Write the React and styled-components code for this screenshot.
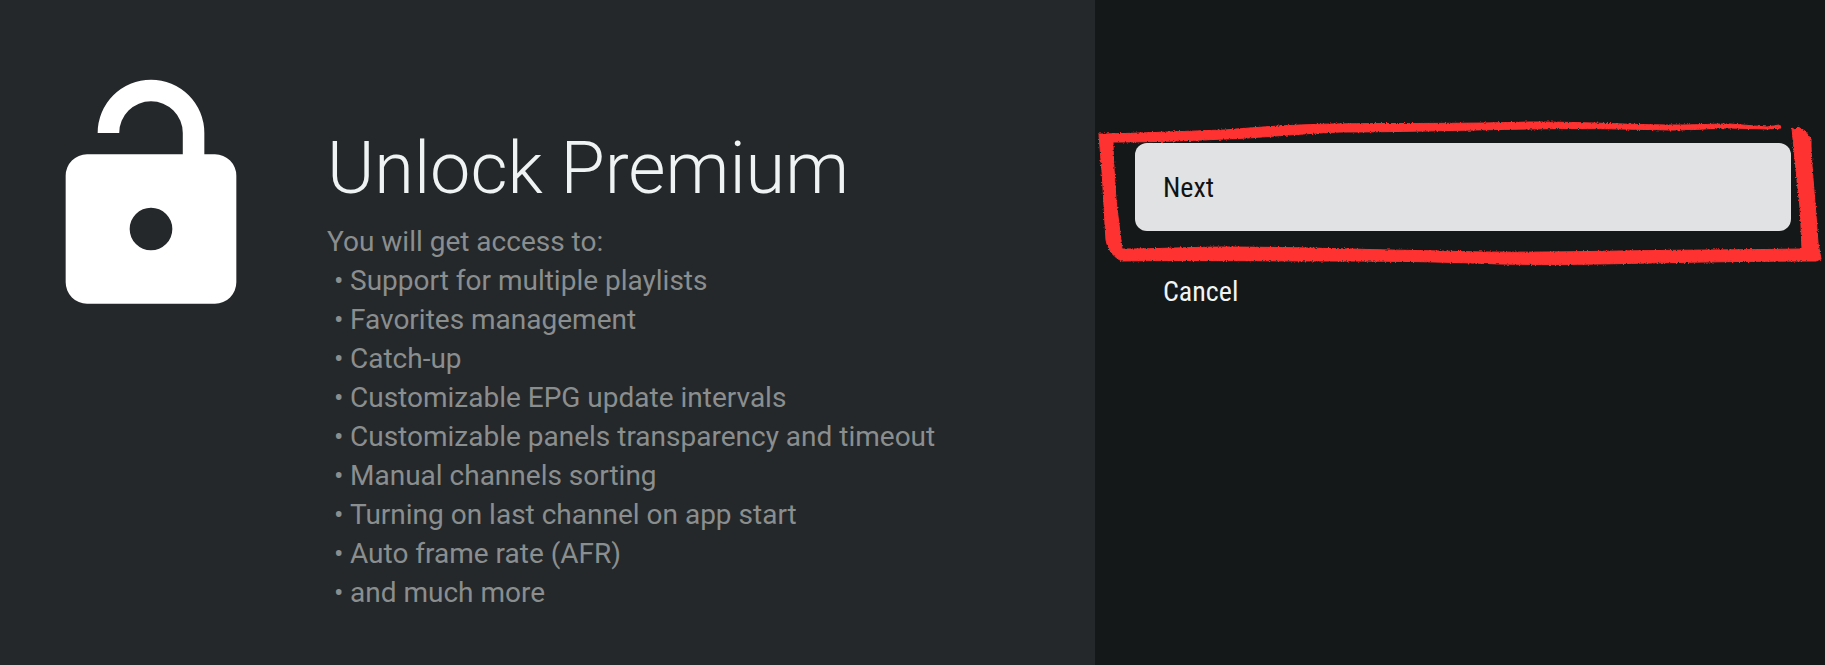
import React from "react";
import styled, { createGlobalStyle } from "styled-components";

const features = [
  "Support for multiple playlists",
  "Favorites management",
  "Catch-up",
  "Customizable EPG update intervals",
  "Customizable panels transparency and timeout",
  "Manual channels sorting",
  "Turning on last channel on app start",
  "Auto frame rate (AFR)",
  "and much more",
];

const LockIcon = () => (
  <Lock viewBox="0 0 24 24" aria-hidden="true">
    <path
      fillRule="evenodd"
      d="M18 8h-1V6A5 5 0 0 0 7 6h2.02a2.98 2.98 0 0 1 5.96 0v2H6a2 2 0 0 0-2 2v10a2 2 0 0 0 2 2h12a2 2 0 0 0 2-2V10a2 2 0 0 0-2-2zm-6 9a2 2 0 1 1 0-4 2 2 0 0 1 0 4z"
    />
  </Lock>
);

const BrushFrame = () => (
  <Brush viewBox="1095 113 730 160" preserveAspectRatio="none" aria-hidden="true">
    <filter id="rough" x="-2%" y="-10%" width="104%" height="120%">
      <feTurbulence type="fractalNoise" baseFrequency="0.6" numOctaves="2" seed="4" />
      <feDisplacementMap in="SourceGraphic" scale="3" xChannelSelector="R" yChannelSelector="G" />
    </filter>
    <g filter="url(#rough)">
      <path d="M1099 134 L1103 134 C1150 133 1190 131 1225 130 C1260 127 1290 125 1330 124 C1400 123 1470 124 1530 122 C1590 122 1630 125 1673 125 C1700 125 1710 124 1730 124 L1755 126 L1767 127 L1779 125 L1781 128 L1767 129 L1730 128 C1710 128 1700 130 1670 130 C1620 129 1590 128 1530 129 C1460 130 1400 132 1340 132 C1290 134 1260 138 1225 139 C1180 141 1150 142 1113 142 C1113 160 1115 180 1116 200 L1122 249 C1160 249 1190 247 1230 247 C1300 247 1370 250 1440 251 C1500 253 1560 252 1620 251 C1680 250 1740 250 1802 249 C1801 230 1801 210 1798 190 C1796 170 1794 150 1792 128 L1795 130 L1798 127 L1805 131 L1811 139 L1811 146 C1812 170 1814 190 1816 215 L1818 243 L1821 259 L1816 261 C1760 261 1700 262 1650 263 C1600 264 1560 265 1500 264 C1450 262 1400 261 1340 261 C1260 261 1190 260 1122 261 C1115 258 1108 251 1106 240 C1104 210 1103 180 1101 160 Z" />
    </g>
  </Brush>
);

const App = () => {
  return (
    <Page>
      <GlobalStyle />
      <Guidance>
        <LockIcon />
        <Description>
          <Title>Unlock Premium</Title>
          <Intro>You will get access to:</Intro>
          <FeatureList>
            {features.map((feature) => (
              <Feature key={feature}>{feature}</Feature>
            ))}
          </FeatureList>
        </Description>
      </Guidance>
      <Actions>
        <Highlighted>
          <ActionButton $selected>Next</ActionButton>
          <BrushFrame />
        </Highlighted>
        <ActionButton>Cancel</ActionButton>
      </Actions>
    </Page>
  );
};

const GlobalStyle = createGlobalStyle`
  * {
    box-sizing: border-box;
  }

  body {
    margin: 0;
    background: #141819;
    font-family: Roboto, "Liberation Sans", sans-serif;
  }
`;

const Page = styled.main`
  display: grid;
  grid-template-columns: 3fr 2fr;
  min-height: 100vh;
`;

const Guidance = styled.section`
  display: flex;
  align-items: flex-start;
  gap: 48px;
  padding: 69px 24px 36px 23px;
  background: #24282a;
`;

const Lock = styled.svg`
  flex: none;
  width: 256px;
  height: 256px;
  fill: #fefffe;
`;

const Description = styled.div`
  padding-top: 56px;
`;

const Title = styled.h1`
  margin: 0 0 9px;
  color: #eff3f3;
  font-size: 72px;
  font-weight: 300;
  line-height: 88px;
`;

const Intro = styled.p`
  margin: 0;
  color: #8b8e8f;
  font-size: 28px;
  line-height: 39px;
`;

const FeatureList = styled.ul`
  margin: 0;
  padding: 0;
  list-style: none;
`;

const Feature = styled.li`
  display: flex;
  color: #8b8e8f;
  font-size: 28px;
  line-height: 39px;

  &::before {
    content: "•";
    width: 16px;
    margin-left: 7px;
  }
`;

const Actions = styled.section`
  display: flex;
  flex-direction: column;
  gap: 16px;
  padding: 143px 34px 24px 40px;
  background: #141819;
`;

const Highlighted = styled.div`
  position: relative;
  display: flex;
`;

const ActionButton = styled.button`
  width: 100%;
  height: 88px;
  padding: 0 28px;
  border: 0;
  border-radius: 12px;
  background: ${({ $selected }) => ($selected ? "#e0e2e3" : "transparent")};
  color: ${({ $selected }) => ($selected ? "#111415" : "#f1f4f4")};
  font-family: "Roboto Condensed", Roboto, "Liberation Sans", sans-serif;
  font-size: 28px;
  text-align: left;
  cursor: pointer;
`;

const Brush = styled.svg`
  position: absolute;
  top: -30px;
  left: -40px;
  width: calc(100% + 74px);
  height: 160px;
  fill: #ff3131;
  stroke: #ff3131;
  stroke-width: 1px;
  pointer-events: none;
`;

export default App;
